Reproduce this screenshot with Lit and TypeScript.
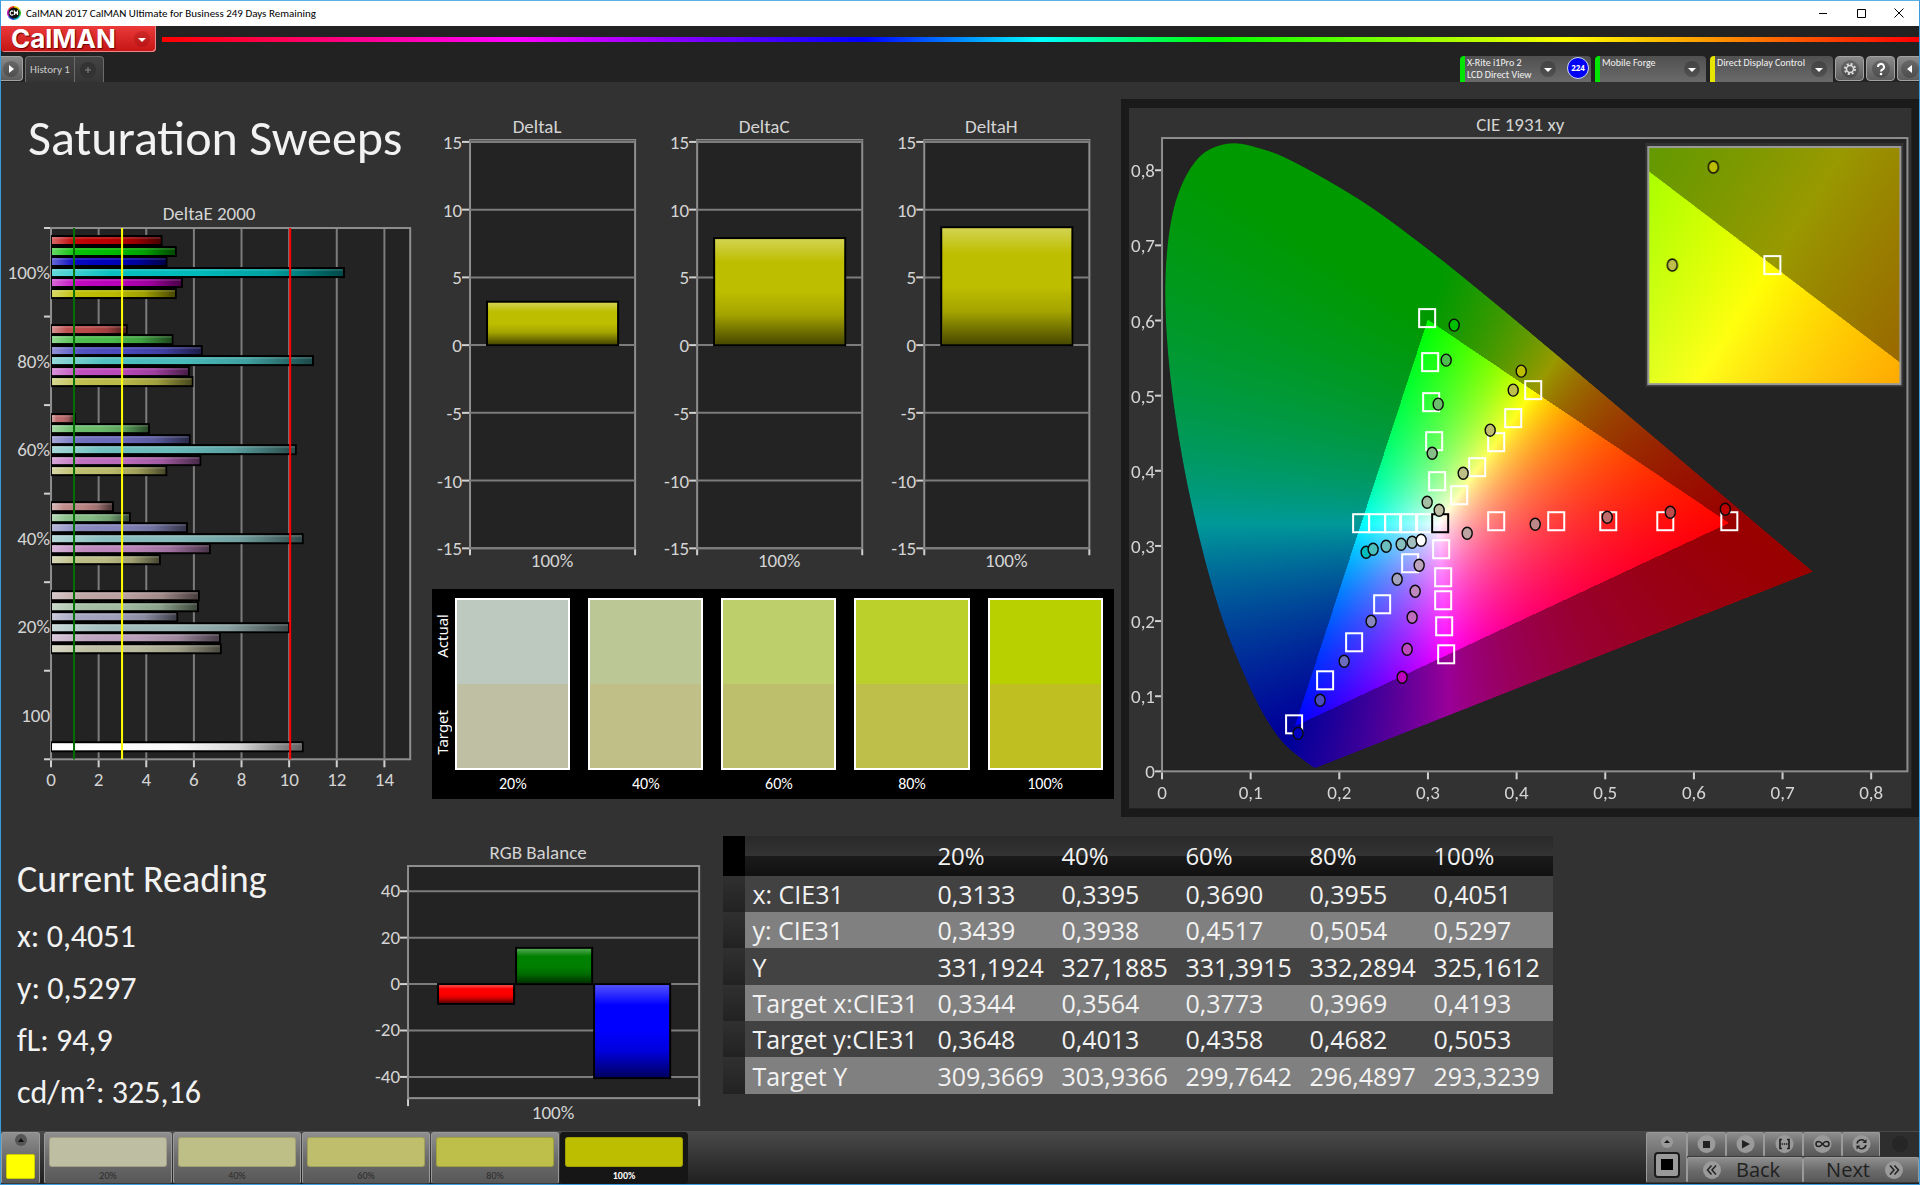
import { LitElement, html, svg, css } from "lit";
import { customElement } from "lit/decorators.js";
import { classMap } from "lit/directives/class-map.js";
import { styleMap } from "lit/directives/style-map.js";

type Point = [number, number];
type Rgb = [number, number, number];

const LEVELS = ["20%", "40%", "60%", "80%", "100%"];

/** Low channel of a patch at each saturation level; the high channel is 190. */
const LOW: Record<string, number> = { "100%": 0, "80%": 75, "60%": 108, "40%": 135, "20%": 163 };
const HUES = ["red", "green", "blue", "cyan", "magenta", "yellow"];

function patch(hue: string, level: string): string {
  const hi = 190;
  const lo = LOW[level];
  const on: Record<string, string> = {
    red: "100", green: "010", blue: "001", cyan: "011", magenta: "101", yellow: "110",
  };
  return `rgb(${[...on[hue]].map((c) => (c === "1" ? hi : lo)).join(",")})`;
}

const DELTA_E: { label: string; values: number[] }[] = [
  { label: "100%", values: [4.68, 5.28, 4.89, 12.34, 5.54, 5.28] },
  { label: "80%", values: [3.22, 5.14, 6.37, 11.04, 5.83, 5.98] },
  { label: "60%", values: [1.04, 4.15, 5.86, 10.32, 6.31, 4.88] },
  { label: "40%", values: [2.64, 3.35, 5.75, 10.61, 6.71, 4.61] },
  { label: "20%", values: [6.25, 6.21, 5.34, 10.04, 7.13, 7.17] },
];

const DELTAS = [
  { name: "DeltaL", value: 3.2 },
  { name: "DeltaC", value: 7.9 },
  { name: "DeltaH", value: 8.7 },
];

const BALANCE = [
  { color: "#ff0000", value: -8.5 },
  { color: "#008000", value: 15.6 },
  { color: "#0000ff", value: -40.5 },
];

const SWATCHES = [
  { label: "20%", actual: "#bdc8bf", target: "#bebfa3" },
  { label: "40%", actual: "#bbc896", target: "#bfbf87" },
  { label: "60%", actual: "#bccf6b", target: "#bebf6c" },
  { label: "80%", actual: "#bbd02a", target: "#bebf4b" },
  { label: "100%", actual: "#b8d000", target: "#c0bf22" },
];

const TABLE: [string, string[]][] = [
  ["x: CIE31", ["0,3133", "0,3395", "0,3690", "0,3955", "0,4051"]],
  ["y: CIE31", ["0,3439", "0,3938", "0,4517", "0,5054", "0,5297"]],
  ["Y", ["331,1924", "327,1885", "331,3915", "332,2894", "325,1612"]],
  ["Target x:CIE31", ["0,3344", "0,3564", "0,3773", "0,3969", "0,4193"]],
  ["Target y:CIE31", ["0,3648", "0,4013", "0,4358", "0,4682", "0,5053"]],
  ["Target Y", ["309,3669", "303,9366", "299,7642", "296,4897", "293,3239"]],
];

const LOCUS: Point[] = [
  [0.1741, 0.005], [0.1714, 0.0051], [0.1689, 0.0069], [0.1644, 0.0109], [0.1566, 0.0177],
  [0.151, 0.0227], [0.144, 0.0297], [0.1355, 0.0399], [0.1241, 0.0578], [0.1096, 0.0868],
  [0.0913, 0.1327], [0.0687, 0.2007], [0.0454, 0.295], [0.0235, 0.4127], [0.0082, 0.5384],
  [0.0039, 0.6548], [0.0139, 0.7502], [0.0389, 0.812], [0.0743, 0.8338], [0.1142, 0.8262],
  [0.1547, 0.8059], [0.2296, 0.7543], [0.3016, 0.6923], [0.3731, 0.6245], [0.4441, 0.5547],
  [0.5125, 0.4866], [0.5752, 0.4242], [0.627, 0.3725], [0.6658, 0.334], [0.6915, 0.3083],
  [0.719, 0.2809], [0.7347, 0.2653],
];

/** Linear sRGB of a chromaticity, scaled to full drive and dimmed outside the gamut. */
function chroma(x: number, y: number): Rgb {
  const yy = Math.max(y, 0.0001);
  const X = x / yy;
  const Z = (1 - x - yy) / yy;
  const r = 3.2406 * X - 1.5372 - 0.4986 * Z;
  const g = -0.9689 * X + 1.8758 + 0.0415 * Z;
  const b = 0.0557 * X - 0.204 + 1.057 * Z;
  const k = (Math.min(r, g, b) < 0 ? 153 : 255) / Math.max(r, g, b);
  return [Math.max(r, 0) * k, Math.max(g, 0) * k, Math.max(b, 0) * k];
}

function paint(canvas: HTMLCanvasElement, x0: number, x1: number, y0: number, y1: number): void {
  const ctx = canvas.getContext("2d")!;
  const { width, height } = canvas;
  const image = ctx.createImageData(width, height);
  let i = 0;
  for (let row = 0; row < height; row++) {
    const y = y1 - ((row + 0.5) / height) * (y1 - y0);
    for (let col = 0; col < width; col++) {
      const x = x0 + ((col + 0.5) / width) * (x1 - x0);
      const [r, g, b] = chroma(x, y);
      image.data[i++] = r;
      image.data[i++] = g;
      image.data[i++] = b;
      image.data[i++] = 255;
    }
  }
  ctx.putImageData(image, 0, 0);
}

function maskLocus(canvas: HTMLCanvasElement, x1: number, y1: number): void {
  const ctx = canvas.getContext("2d")!;
  const p = LOCUS.map(([x, y]): Point => [(x / x1) * canvas.width, (1 - y / y1) * canvas.height]);
  ctx.globalCompositeOperation = "destination-in";
  ctx.beginPath();
  ctx.moveTo(...p[0]);
  for (let i = 0; i < p.length - 1; i++) {
    const a = p[Math.max(i - 1, 0)];
    const b = p[i];
    const c = p[i + 1];
    const d = p[Math.min(i + 2, p.length - 1)];
    ctx.bezierCurveTo(
      b[0] + (c[0] - a[0]) / 6, b[1] + (c[1] - a[1]) / 6,
      c[0] - (d[0] - b[0]) / 6, c[1] - (d[1] - b[1]) / 6,
      c[0], c[1],
    );
  }
  ctx.closePath();
  ctx.fill();
}

const TARGETS: Point[] = [
  [1427, 319], [1430, 363], [1431, 403], [1434, 442], [1437, 482],
  [1533, 391], [1513, 419], [1496, 443], [1477, 468], [1459, 496],
  [1361, 524], [1377, 524], [1393, 524], [1408, 524], [1425, 524],
  [1496, 522], [1556, 522], [1608, 522], [1665, 522], [1729, 522],
  [1441, 550], [1443, 578], [1443, 601], [1444, 627], [1446, 655],
  [1410, 564], [1382, 605], [1354, 643], [1325, 681], [1294, 725],
];

/** Measured points of each hue, from 100% down to 20%. */
const MEASURED: Record<string, Point[]> = {
  green: [[1454, 326], [1446, 361], [1438, 405], [1432, 454], [1427, 503]],
  yellow: [[1521, 372], [1513, 391], [1490, 431], [1463, 474], [1439, 511]],
  red: [[1725, 510], [1670, 513], [1607, 518], [1535, 525], [1467, 534]],
  cyan: [[1366, 553], [1373, 550], [1386, 547], [1401, 545], [1412, 543]],
  magenta: [[1402, 678], [1407, 650], [1412, 618], [1415, 592], [1419, 566]],
  blue: [[1298, 734], [1320, 701], [1344, 662], [1371, 622], [1397, 580]],
};

const chartText = css`
  text {
    font-family: Carlito, Lato, sans-serif;
    font-size: 19px;
    fill: #d4d4d4;
  }
  svg {
    display: block;
    width: 100%;
  }
  .plot { fill: #232323; stroke: #8e8e8e; stroke-width: 2; }
  .grid { stroke: #7c7c7c; stroke-width: 2; }
  .tick { stroke: #d0d0d0; stroke-width: 2; }
  .end { text-anchor: end; }
  .mid { text-anchor: middle; }
`;

@customElement("delta-e-chart")
export class DeltaEChart extends LitElement {
  static styles = [chartText, css`:host { display: block; }`];

  private x(v: number): number {
    return 51 + v * 23.8;
  }

  private bar(y: number, value: number, color: string) {
    const w = this.x(value) - 51;
    return svg`
      <rect x="51" y=${y} width=${w} height="11" fill="#000"></rect>
      <rect x="52" y=${y + 2} width=${w - 3} height="7" fill=${color}></rect>
      <rect x="52" y=${y + 2} width=${w - 3} height="7" fill="url(#sheen)"></rect>
      <rect x="52" y=${y + 2} width=${w - 3} height="2" fill="#fff" opacity="0.12"></rect>`;
  }

  render() {
    const even = [2, 4, 6, 8, 10, 12, 14];
    return html`<svg viewBox="1 200 431 600" role="img" aria-label="DeltaE 2000">
      <defs>
        <linearGradient id="sheen">
          <stop offset="0" stop-color="#fff" stop-opacity="0.4"></stop>
          <stop offset="0.2" stop-color="#fff" stop-opacity="0.04"></stop>
          <stop offset="0.5" stop-color="#000" stop-opacity="0.02"></stop>
          <stop offset="0.75" stop-color="#000" stop-opacity="0.16"></stop>
          <stop offset="1" stop-color="#000" stop-opacity="0.62"></stop>
        </linearGradient>
      </defs>
      <text class="mid" x="209" y="220">DeltaE 2000</text>
      <rect class="plot" x="51" y="228" width="359" height="531"></rect>
      ${even.map((v) => svg`<line class="grid" x1=${this.x(v)} x2=${this.x(v)} y1="229" y2="758"></line>
        <line class="tick" x1=${this.x(v)} x2=${this.x(v)} y1="760" y2="767"></line>`)}
      <line class="tick" x1="51" x2="51" y1="760" y2="767"></line>
      ${[0, 1, 2, 3, 4, 5, 6].map((i) => svg`<line class="tick" x1="44" x2="50" y1=${228 + i * 88.5} y2=${228 + i * 88.5}></line>`)}
      ${DELTA_E.map((g, i) => svg`
        ${g.values.map((v, j) => this.bar(235 + Math.round(i * 88.8 + j * 10.5), v, patch(HUES[j], g.label)))}
        <text class="end" x="50" y=${Math.round(279 + i * 88.5)}>${g.label}</text>`)}
      ${this.bar(741, 10.61, "#ffffff")}
      <text class="end" x="50" y="722">100</text>
      <line x1="74" x2="74" y1="228" y2="759" stroke="#007000" stroke-width="2"></line>
      <line x1="122" x2="122" y1="228" y2="759" stroke="#ffff00" stroke-width="2"></line>
      <line x1="290" x2="290" y1="228" y2="759" stroke="#ff0000" stroke-width="2"></line>
      ${[0, ...even].map((v) => svg`<text class="mid" x=${this.x(v)} y="786">${v}</text>`)}
    </svg>`;
  }
}

const sheenDown = svg`<defs>
  <linearGradient id="down" x2="0" y2="1">
    <stop offset="0" stop-color="#fff" stop-opacity="0.32"></stop>
    <stop offset="0.22" stop-color="#fff" stop-opacity="0"></stop>
    <stop offset="0.5" stop-color="#000" stop-opacity="0"></stop>
    <stop offset="0.72" stop-color="#000" stop-opacity="0.14"></stop>
    <stop offset="1" stop-color="#000" stop-opacity="0.62"></stop>
  </linearGradient>
</defs>`;

function column(x: number, width: number, top: number, bottom: number, color: string) {
  return svg`
    <rect x=${x} y=${top} width=${width} height=${bottom - top} fill=${color} stroke="#000" stroke-width="2"></rect>
    <rect x=${x + 1} y=${top + 1} width=${width - 2} height=${bottom - top - 2} fill="url(#down)"></rect>`;
}

@customElement("delta-columns")
export class DeltaColumns extends LitElement {
  static styles = [chartText, css`:host { display: block; }`];

  private y(v: number): number {
    return 345 - v * 13.54;
  }

  render() {
    return html`<svg viewBox="433 109 681 480" role="img" aria-label="DeltaL, DeltaC and DeltaH">
      ${sheenDown}
      ${DELTAS.map((d, i) => {
        const x = 471 + i * 227;
        return svg`
          <text class="mid" x=${x + 67} y="133">${d.name}</text>
          <rect class="plot" x=${x} y="140" width="165" height="408"></rect>
          <rect x=${x} y="140" width="165" height="3" fill="#5c5c5c"></rect>
          ${[15, 10, 5, 0, -5, -10, -15].map((v) => svg`
            <line class="grid" x1=${x} x2=${x + 165} y1=${this.y(v)} y2=${this.y(v)}></line>
            <line class="tick" x1=${x - 8} x2=${x - 1} y1=${this.y(v)} y2=${this.y(v)}></line>
            <text class="end" x=${x - 8} y=${this.y(v) + 7}>${v}</text>`)}
          <line class="tick" x1=${x} x2=${x} y1="549" y2="555"></line>
          <line class="tick" x1=${x + 165} x2=${x + 165} y1="549" y2="555"></line>
          ${column(x + 17, 131, this.y(d.value), 345, "#bebe00")}
          <text class="mid" x=${x + 82} y="567">100%</text>`;
      })}
    </svg>`;
  }
}

@customElement("rgb-balance")
export class RgbBalance extends LitElement {
  static styles = [chartText, css`:host { display: block; }`];

  private y(v: number): number {
    return 984 - v * 2.32;
  }

  render() {
    return html`<svg viewBox="361 836 362 294" role="img" aria-label="RGB Balance">
      ${sheenDown}
      <text class="mid" x="538" y="859">RGB Balance</text>
      <rect class="plot" x="408" y="866" width="291" height="232"></rect>
      ${[40, 20, 0, -20, -40].map((v) => svg`
        <line class="grid" x1="408" x2="699" y1=${this.y(v)} y2=${this.y(v)}></line>
        <line class="tick" x1="400" x2="407" y1=${this.y(v)} y2=${this.y(v)}></line>
        <text class="end" x="400" y=${this.y(v) + 6}>${v}</text>`)}
      <line class="tick" x1="408" x2="408" y1="1099" y2="1106"></line>
      <line class="tick" x1="699" x2="699" y1="1099" y2="1106"></line>
      ${BALANCE.map((b, i) => column(438 + i * 78, 76, Math.min(984, this.y(b.value)), Math.max(984, this.y(b.value)), b.color))}
      <text class="mid" x="553" y="1119">100%</text>
    </svg>`;
  }
}

@customElement("cie-chart")
export class CieChart extends LitElement {
  static styles = [
    chartText,
    css`
      :host { display: block; background: #1a1a1a; }
      canvas { display: block; width: 100%; height: 100%; }
      .target { fill: none; stroke: #fff; stroke-width: 2; }
      .white { stroke: #000; }
      .dot { stroke: #0a0a0a; stroke-width: 1.4; }
    `,
  ];

  firstUpdated() {
    const main = this.renderRoot.querySelector<HTMLCanvasElement>(".gamut")!;
    paint(main, 0, 0.75, 0, 0.84);
    maskLocus(main, 0.75, 0.84);
    const inset = this.renderRoot.querySelector<HTMLCanvasElement>(".detail")!;
    paint(inset, 0.3899, 0.4501, 0.4755, 0.5348);
  }

  private target(x: number, y: number, extra = "") {
    return svg`<rect class="target ${extra}" x=${x - 8} y=${y - 9} width="16" height="18"></rect>`;
  }

  private dot(x: number, y: number, color: string) {
    return svg`<ellipse class="dot" cx=${x} cy=${y} rx="5" ry="6" fill=${color}></ellipse>`;
  }

  render() {
    const levels = [...LEVELS].reverse();
    const ticks = [0, 1, 2, 3, 4, 5, 6, 7, 8];
    const name = (v: number) => (v ? `0,${v}` : "0");
    return html`<svg viewBox="1121 100 798 718" role="img" aria-label="CIE 1931 xy">
      <rect x="1129" y="109" width="782" height="700" fill="#323232"></rect>
      <text class="mid" x="1520" y="132">CIE 1931 xy</text>
      <rect class="plot" x="1162" y="139" width="745" height="633"></rect>
      <foreignObject x="1162" y="140" width="664" height="632">
        <canvas class="gamut" width="1328" height="1264"></canvas>
      </foreignObject>
      ${ticks.map((v) => svg`
        <line class="tick" x1="1155" x2="1161" y1=${772 - v * 75.1} y2=${772 - v * 75.1}></line>
        <text class="end" x="1155" y=${779 - v * 75.1}>${name(v)}</text>
        <line class="tick" x1=${1162 + v * 88.6} x2=${1162 + v * 88.6} y1="773" y2="780"></line>
        <text class="mid" x=${1162 + v * 88.6} y="800">${name(v)}</text>`)}
      ${TARGETS.map(([x, y]) => this.target(x, y))}
      ${this.target(1440, 524, "white")}
      ${Object.entries(MEASURED).map(([hue, points]) => points.map(([x, y], i) => this.dot(x, y, patch(hue, levels[i]))))}
      ${this.dot(1421, 541, "#ffffff")}
      <rect x="1645" y="144" width="258" height="244" fill="#333"></rect>
      <foreignObject x="1648" y="147" width="252" height="238">
        <canvas class="detail" width="504" height="476"></canvas>
      </foreignObject>
      <rect x="1648" y="148" width="252" height="237" fill="none" stroke="#9a9a9a" stroke-width="2"></rect>
      ${this.target(1772, 266)}
      ${this.dot(1713, 168, "#bebe00")}
      ${this.dot(1672, 266, "#bebf4b")}
    </svg>`;
  }
}

const caret = html`<svg class="caret" viewBox="0 0 18 18" aria-hidden="true">
  <circle class="well" cx="9" cy="9" r="8"></circle>
  <path d="M5 8h8l-4 4z" fill="#fff"></path>
</svg>`;

@customElement("app-root")
export class AppRoot extends LitElement {
  static styles = css`
    :host {
      display: block;
      font-family: Carlito, Lato, sans-serif;
      color: #f2f2f2;
    }
    * { box-sizing: border-box; }
    button { font: inherit; color: inherit; border: 0; padding: 0; margin: 0; background: none; }
    .window { border: 1px solid #3c9bdc; border-top-color: #5ab1e8; background: #323232; }

    .titlebar {
      display: flex; align-items: center; height: 25px; padding: 0 1px 1px 6px;
      background: #fff; color: #000; font-size: 11px;
    }
    .app-icon { width: 14px; height: 14px; margin-right: 5px; }
    .caption { flex: 1; }
    .sysbtn { width: 38px; height: 23px; display: grid; place-items: center; }
    .sysbtn svg { width: 10px; height: 10px; }

    .brandrow { display: flex; align-items: center; height: 26px; background: #222; }
    .brand {
      display: flex; align-items: center; justify-content: space-between; height: 26px; width: 155px; padding: 0 5px 0 10px;
      background: linear-gradient(#ec3a3a, #c41414); border-radius: 0 0 4px 4px;
      box-shadow: inset -1px -1px 0 #e88;
      font: 700 26px/24px Inter, sans-serif; color: #fff; text-shadow: 1px 1px 1px #600;
    }
    .caret { width: 18px; height: 18px; flex: none; }
    .well { fill: rgba(0, 0, 0, 0.2); }
    .brand .well { fill: rgba(120, 0, 0, 0.2); }
    .rainbow {
      flex: 1; height: 5px; margin-left: 6px;
      background: linear-gradient(90deg, #f00, #f0f 20%, #00f 40%, #0ff 50%, #0f0 60%, #ff0 80%, #f00);
    }

    .tabrow { display: flex; align-items: stretch; gap: 2px; height: 30px; padding-top: 4px; background: #222; }
    .spacer { flex: 1; }
    .square {
      width: 29px; height: 25px; display: grid; place-items: center; border-radius: 4px;
      background: linear-gradient(#8a8a8a, #5c5c5c); border: 1px solid #a2a2a2;
    }
    .square svg { width: 20px; height: 20px; }
    .square.start { width: 22px; border-radius: 0 4px 4px 0; border-left: 0; }
    .square.finish { width: 22px; border-radius: 4px 0 0 4px; border-right: 0; }
    .tabs {
      display: flex; width: 79px; border: 1px solid #6c6c6c; border-bottom: 0; border-radius: 4px 4px 0 0;
      background: linear-gradient(#444, #363636); font-size: 11px; color: #ccc;
    }
    .tab { width: 49px; border-right: 1px solid #6c6c6c; }
    .add { flex: 1; padding-right: 2px; display: grid; place-items: center; }
    .add svg { width: 18px; height: 18px; }
    .device {
      display: flex; align-items: flex-start; gap: 2px; margin-right: 2px; padding-right: 5px;
      border-left: 5px solid #00e600; border-radius: 4px 4px 0 0;
      background: linear-gradient(#505050, #6a6a6a); font-size: 10px; line-height: 12px;
    }
    .device.pending { border-left-color: #e6e600; margin-right: 0; }
    .device .label { flex: 1; text-align: left; padding: 1px 0 0 2px; }
    .device .caret { margin-top: 4px; }
    .meter { width: 131px; padding-right: 2px; }
    .source { width: 111px; }
    .display { width: 123px; }
    .badge {
      width: 22px; height: 22px; margin: 1px 0 0 8px; border-radius: 50%; border: 1px solid #cde;
      background: #0000f4; color: #fff; font: 700 8px/20px "Open Sans", sans-serif; text-align: center;
    }

    .top { display: grid; grid-template-columns: 431fr 681fr 7fr 798fr; }
    .sweeps { grid-column: 1; padding-top: 24px; }
    h1 { margin: 0 0 30px; padding-left: 27px; font-size: 50px; line-height: 64px; font-weight: 400; white-space: nowrap; }
    .middle { grid-column: 2; padding-top: 27px; }
    .gamut { grid-column: 4; padding-top: 17px; }

    .compare { display: flex; gap: 5px; padding: 9px 11px 0 2px; height: 210px; background: #000; }
    .sides {
      display: flex; flex-direction: column; justify-content: space-between; height: 172px; width: 16px; padding: 16px 0;
      font: 15px/16px "Noto Sans", sans-serif; color: #fff;
    }
    .sides span { writing-mode: vertical-rl; rotate: 180deg; }
    .patches { flex: 1; display: grid; grid-template-columns: repeat(5, 1fr); gap: 18px; }
    .pair { margin: 0; }
    .pair .box { height: 172px; border: 2px solid #fff; display: grid; grid-template-rows: 1fr 1fr; }
    .pair figcaption { text-align: center; font-size: 16px; line-height: 28px; color: #fff; }

    .bottom { display: grid; grid-template-columns: 360fr 362fr 829fr 366fr; padding-top: 19px; }
    .reading { padding: 17px 0 0 16px; font-size: 32px; line-height: 52px; white-space: nowrap; }
    .reading h2 { margin: 0 0 6px; font-size: 38px; line-height: 52px; font-weight: 400; }
    .reading p { margin: 0; }

    table { width: 100%; border-collapse: collapse; font: 25px/36px "Open Sans", sans-serif; table-layout: fixed; }
    thead th { width: 124px; height: 40px; background: linear-gradient(#292929, #333 49%, #1a1a1a 51%, #111); font-size: 24px; }
    thead th:last-child { width: auto; }
    th, td { padding: 0; text-align: left; font-weight: 400; white-space: nowrap; }
    tbody th { padding-left: 7px; }
    tbody tr { height: 36px; background: #424242; }
    tbody tr:nth-child(even) { background: #808080; }
    tbody tr:nth-child(3n) { height: 37px; }
    .gutter { background: linear-gradient(#303030, #222); }
    thead .gutter { width: 22px; background: #000; }
    thead .names { width: 192px; }

    .dock {
      display: flex; height: 53px; padding-top: 1px;
      background: linear-gradient(#4a4a4a, #1f1f1f);
    }
    .raised { background: linear-gradient(#8e8e8e, #6c6c6c 50%, #585858); border: 1px solid #9a9a9a; border-bottom-color: #3a3a3a; border-radius: 3px; }
    .current { width: 39px; margin-right: 4px; display: flex; flex-direction: column; align-items: center; gap: 7px; }
    .current svg { width: 14px; height: 14px; }
    .current i { width: 29px; height: 25px; border-radius: 2px; background: #ff0; border: 1px solid #cc0; }
    .level { width: 128px; margin-right: 1px; padding: 4px 4px 0; font-size: 10px; line-height: 14px; color: #2c2c2c; text-align: center; }
    .level i { display: block; height: 30px; margin-bottom: 2px; border-radius: 3px; border: 1px solid rgba(0, 0, 0, 0.15); }
    .level.on { background: #161616; border-color: #161616; color: #fff; font-weight: 700; }
    .transport { display: grid; grid-template-columns: 41px repeat(6, 1fr); grid-template-rows: 25px 26px; width: 273px; font: 20px/24px "Open Sans", sans-serif; color: #1f1f1f; }
    .transport .raised { display: flex; align-items: center; justify-content: center; gap: 14px; border-radius: 2px; }
    .transport svg { width: 20px; height: 20px; }
    .transport .stack { grid-row: 1 / 3; flex-direction: column; gap: 2px; }
    .transport .stack .up { width: 14px; height: 14px; }
    .transport .stack .stop { width: 28px; height: 28px; }
    .transport .wide { grid-column: span 3; padding: 0 14px; }
    .transport .back { justify-content: flex-start; }
    .transport .next { justify-content: flex-end; }
    .transport .idle { display: grid; place-items: center; background: #2e2e2e; }
    .disc { fill: #9a9a9a; }
  `;

  private header() {
    return html`
      <header>
        <div class="titlebar">
          <svg class="app-icon" viewBox="0 0 14 14" aria-hidden="true">
            <path d="M7 7V0a7 7 0 0 1 6 3.500z" fill="#e8d000"></path>
            <path d="M7 7l6-3.500a7 7 0 0 1 0 7z" fill="#30c030"></path>
            <path d="M7 7l6 3.500A7 7 0 0 1 7 14z" fill="#00b8c8"></path>
            <path d="M7 7v7a7 7 0 0 1-6-3.500z" fill="#3040e0"></path>
            <path d="M7 7L1 10.500a7 7 0 0 1 0-7z" fill="#c020c0"></path>
            <path d="M7 7L1 3.500A7 7 0 0 1 7 0z" fill="#e83020"></path>
            <circle cx="7" cy="7" r="5.500" fill="#111"></circle>
            <path d="M6.300 5.400a2 2 0 1 0 0 3.200M7.500 9V5.300l1.500 2 1.500-2V9" fill="none" stroke="#fff" stroke-width="1.200"></path>
          </svg>
          <span class="caption">CalMAN 2017 CalMAN Ultimate for Business 249 Days Remaining</span>
          <button class="sysbtn" aria-label="Minimize"><svg viewBox="0 0 10 10"><path d="M1 5.500h8" stroke="#000"></path></svg></button>
          <button class="sysbtn" aria-label="Maximize"><svg viewBox="0 0 10 10"><path d="M1.500 1.500h8v8h-8z" fill="none" stroke="#000"></path></svg></button>
          <button class="sysbtn" aria-label="Close"><svg viewBox="0 0 10 10"><path d="M0.500 0.500l9 9M9.500 0.500l-9 9" stroke="#000"></path></svg></button>
        </div>
        <div class="brandrow">
          <button class="brand">CalMAN ${caret}</button>
          <div class="rainbow"></div>
        </div>
        <div class="tabrow">
          <button class="square start" aria-label="Expand">
            <svg viewBox="0 0 20 20"><circle class="well" cx="9" cy="10" r="8"></circle><path d="M7 6v8l5-4z" fill="#fff"></path></svg>
          </button>
          <div class="tabs">
            <button class="tab">History 1</button>
            <button class="add" aria-label="Add history">
              <svg viewBox="0 0 18 18"><circle cx="9" cy="9" r="8" fill="#333"></circle><path d="M6 9h6M9 6v6" stroke="#888"></path></svg>
            </button>
          </div>
          <div class="spacer"></div>
          <button class="device meter">
            <span class="label">X-Rite i1Pro 2<br />LCD Direct View</span>${caret}<span class="badge">224</span>
          </button>
          <button class="device source"><span class="label">Mobile Forge</span>${caret}</button>
          <button class="device display pending"><span class="label">Direct Display Control</span>${caret}</button>
          <button class="square" aria-label="Settings">
            <svg viewBox="0 0 20 20"><circle class="well" cx="10" cy="10" r="9"></circle>
              <circle cx="10" cy="10" r="3.500" fill="none" stroke="#ddd" stroke-width="1.500"></circle>
              <circle cx="10" cy="10" r="5" fill="none" stroke="#ddd" stroke-width="2" stroke-dasharray="2 1.930"></circle></svg>
          </button>
          <button class="square" aria-label="Help">
            <svg viewBox="0 0 20 20"><circle class="well" cx="10" cy="10" r="9"></circle>
              <path d="M7 8a3 3 0 1 1 4.500 2.500q-1.500.8-1.500 2" fill="none" stroke="#fff" stroke-width="2"></path>
              <circle cx="10" cy="15" r="1.300" fill="#fff"></circle></svg>
          </button>
          <button class="square finish" aria-label="Collapse">
            <svg viewBox="0 0 20 20"><circle class="well" cx="11" cy="10" r="9"></circle><path d="M13 6v8l-5-4z" fill="#fff"></path></svg>
          </button>
        </div>
      </header>`;
  }

  private dock() {
    const tools = [
      { name: "Stop", art: svg`<path d="M7 7h7v7h-7z" fill="#222"></path>` },
      { name: "Play", art: svg`<path d="M7 6l8 4-8 4.500z" fill="#222"></path>` },
      { name: "Read series", art: svg`<path d="M8 5.500H6v9h2M13 5.500h2v9h-2M7.500 10h1.500M9.800 10h1.500M12 10h1.500" fill="none" stroke="#222" stroke-width="1.700"></path>` },
      { name: "Read continuously", art: svg`<path d="M10.500 10q-2-2.500-4-2.500a2.300 2.300 0 0 0 0 5q2 0 4-2.500t4-2.500a2.300 2.300 0 0 1 0 5q-2 0-4-2.500" fill="none" stroke="#222" stroke-width="1.500"></path>` },
      { name: "Refresh", art: svg`<path d="M6 9.500a4.500 4.500 0 0 1 7.500-2.500M15 11a4.500 4.500 0 0 1-7.500 2.500" fill="none" stroke="#222" stroke-width="1.700"></path><path d="M15.500 5v4h-4zM5.500 15.500v-4h4z" fill="#222"></path>` },
    ];
    return html`<footer class="dock">
      <button class="raised current" aria-label="Current patch">
        <svg viewBox="0 0 14 14"><circle cx="7" cy="7" r="6" fill="#555"></circle><path d="M4 9h6l-3-4z" fill="#111"></path></svg>
        <i></i>
      </button>
      ${LEVELS.map((level) => html`
        <button class=${classMap({ level: true, raised: true, on: level === "100%" })}>
          <i style=${styleMap({ background: patch("yellow", level) })}></i>${level}
        </button>`)}
      <div class="spacer"></div>
      <div class="transport">
        <button class="raised stack" aria-label="Patch window">
          <svg class="up" viewBox="0 0 14 14"><circle class="disc" cx="7" cy="7" r="6"></circle><path d="M4 8h6l-3-3z" fill="#111"></path></svg>
          <svg class="stop" viewBox="0 0 28 28"><rect x="2" y="2" width="24" height="24" rx="3" fill="#9a9a9a" stroke="#1c1c1c" stroke-width="2"></rect><path d="M8 8h12v11h-12z" fill="#000"></path></svg>
        </button>
        ${tools.map((t) => html`<button class="raised" aria-label=${t.name}>
          <svg viewBox="0 0 20 20"><circle class="disc" cx="10.500" cy="10" r="9"></circle>${t.art}</svg></button>`)}
        <span class="idle"><svg viewBox="0 0 20 20"><circle cx="10" cy="10" r="8" fill="#262626"></circle></svg></span>
        <button class="raised wide back">
          <svg viewBox="0 0 20 20"><circle class="disc" cx="10" cy="10" r="9"></circle><path d="M9.500 5.500L5.500 10l4 4.500M14 5.500L10 10l4 4.500" fill="none" stroke="#222" stroke-width="1.500"></path></svg>Back
        </button>
        <button class="raised wide next">
          Next<svg viewBox="0 0 20 20"><circle class="disc" cx="10" cy="10" r="9"></circle><path d="M6 5.500l4 4.500-4 4.500M10.500 5.500l4 4.500-4 4.500" fill="none" stroke="#222" stroke-width="1.500"></path></svg>
        </button>
      </div>
    </footer>`;
  }

  render() {
    return html`<div class="window">
      ${this.header()}
      <main>
        <div class="top">
          <section class="sweeps"><h1>Saturation Sweeps</h1><delta-e-chart></delta-e-chart></section>
          <section class="middle">
            <delta-columns></delta-columns>
            <div class="compare">
              <div class="sides"><span>Actual</span><span>Target</span></div>
              <div class="patches">
                ${SWATCHES.map((s) => html`<figure class="pair">
                  <div class="box">
                    <div style=${styleMap({ background: s.actual })}></div>
                    <div style=${styleMap({ background: s.target })}></div>
                  </div>
                  <figcaption>${s.label}</figcaption>
                </figure>`)}
              </div>
            </div>
          </section>
          <section class="gamut"><cie-chart></cie-chart></section>
        </div>
        <div class="bottom">
          <section class="reading">
            <h2>Current Reading</h2>
            <p>x: 0,4051</p>
            <p>y: 0,5297</p>
            <p>fL: 94,9</p>
            <p>cd/m²: 325,16</p>
          </section>
          <rgb-balance></rgb-balance>
          <div>
            <table>
              <thead><tr><th class="gutter"></th><th class="names"></th>${LEVELS.map((l) => html`<th scope="col">${l}</th>`)}</tr></thead>
              <tbody>
                ${TABLE.map(([name, cells]) => html`<tr>
                  <td class="gutter"></td><th scope="row">${name}</th>${cells.map((c) => html`<td>${c}</td>`)}
                </tr>`)}
              </tbody>
            </table>
          </div>
        </div>
      </main>
      ${this.dock()}
    </div>`;
  }
}
